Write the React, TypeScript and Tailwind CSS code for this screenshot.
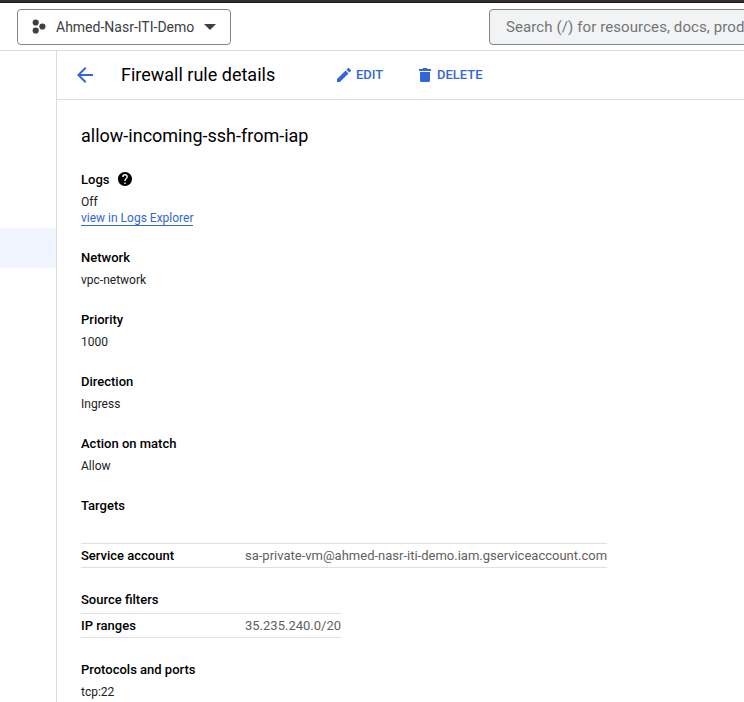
import React from "react";

function Field({ label, value }: { label: string; value: string }) {
  return (
    <div className="mb-[18px]">
      <div className="h-5 text-[13px] leading-5 font-medium text-black">{label}</div>
      <div className="h-6 text-[12px] leading-6 text-[#212121]">{value}</div>
    </div>
  );
}

function Row({ label, value }: { label: string; value: string }) {
  return (
    <div className="flex h-[25px] w-fit border-y border-[#e0e0e0] text-[13px] leading-[24px] whitespace-nowrap">
      <span className="w-[164px] font-medium text-black">{label}</span>
      <span className="text-[#616161]">{value}</span>
    </div>
  );
}

export default function App() {
  return (
    <div className="flex h-[702px] w-[744px] flex-col overflow-hidden bg-white font-['Roboto',sans-serif]">
      <div className="h-[3px] shrink-0 border-b border-[#1b1b1b] bg-[#332f32]" />
      <header className="flex h-12 shrink-0 items-start border-b border-[#dadce0] pt-1.5 pl-[17px]">
        <button className="flex h-9 w-[214px] shrink-0 items-center rounded-[4px] border border-[#80868b] pl-[14px] text-[14px] text-[#3c4043]">
          <svg className="-mt-[2px]" width="14" height="15" viewBox="0 0 14 15" fill="#3c4043">
            <circle cx="3.7" cy="3.5" r="3.1" />
            <circle cx="10.4" cy="7.5" r="3.1" />
            <circle cx="3.7" cy="11.5" r="3.1" />
          </svg>
          <span className="ml-[10px] w-[139px] text-left whitespace-nowrap">Ahmed-Nasr-ITI-Demo</span>
          <svg className="ml-[9px]" width="12" height="6" viewBox="0 0 12 6" fill="#3c4043">
            <path d="M0 0h12L6 6z" />
          </svg>
        </button>
        <div className="ml-[258px] h-9 w-[300px] shrink-0 rounded-[4px] border border-[#80868b] bg-[#f1f3f4] pl-4 text-[15px] leading-[34px] tracking-[0.1px] whitespace-nowrap text-[#757575]">
          Search (/) for resources, docs, prod
        </div>
      </header>
      <div className="flex min-h-0 flex-1">
        <aside className="w-[57px] shrink-0 border-r border-[#dadce0] pt-[177px]">
          <div className="h-10 bg-[#f0f5ff]" />
        </aside>
        <main className="min-w-0 flex-1">
          <div className="flex h-[49px] items-center border-b border-[#dadce0] pl-5">
            <svg width="16" height="16" viewBox="4 4 16 16" fill="#3367d6">
              <path d="M20 11H7.83l5.59-5.59L12 4l-8 8 8 8 1.41-1.41L7.83 13H20v-2z" />
            </svg>
            <h1 className="mb-[2px] ml-7 w-[216px] text-[18px] text-black">Firewall rule details</h1>
            <button className="flex w-[82px] items-center text-[13px] font-medium text-[#3367d6]">
              <svg width="14" height="14" viewBox="3 3 18 18" fill="currentColor">
                <path d="M3 17.25V21h3.75L17.81 9.94l-3.75-3.75L3 17.25zM20.71 7.04a1 1 0 0 0 0-1.41l-2.34-2.34a1 1 0 0 0-1.41 0l-1.83 1.83 3.75 3.75 1.83-1.83z" />
              </svg>
              <span className="ml-[5px]">EDIT</span>
            </button>
            <button className="flex items-center text-[13px] font-medium text-[#3367d6]">
              <svg width="12" height="14" viewBox="0 0 12 14" fill="currentColor">
                <path d="M0 1h3.5L4 0h4l.5 1H12v2H0zM1 4h10v8.5a1.5 1.5 0 0 1-1.5 1.5h-7A1.5 1.5 0 0 1 1 12.5z" />
              </svg>
              <span className="ml-[6px]">DELETE</span>
            </button>
          </div>
          <div className="pt-6 pl-6">
            <h2 className="h-[46px] text-[18px] leading-6 text-black">allow-incoming-ssh-from-iap</h2>
            <div className="mb-[22px]">
              <div className="flex h-5 text-[13px] leading-5 font-medium text-black">
                Logs
                <svg className="mt-[2px] ml-[9px]" width="14" height="14" viewBox="2 2 20 20">
                  <path d="M12 2C6.48 2 2 6.48 2 12s4.48 10 10 10 10-4.48 10-10S17.52 2 12 2zm1 17h-2v-2h2v2zm2.07-7.75-.9.92C13.45 12.9 13 13.5 13 15h-2v-.5c0-1.1.45-2.1 1.17-2.83l1.24-1.26c.37-.36.59-.86.59-1.41a2 2 0 0 0-4 0H8a4 4 0 0 1 8 0c0 .88-.36 1.68-.93 2.25z" />
                </svg>
              </div>
              <div className="mt-1 text-[12px] leading-4 text-[#212121]">Off</div>
              <a className="block h-4 w-fit border-b border-[#3367d6] text-[12px] leading-4 text-[#3367d6]">
                view in Logs Explorer
              </a>
            </div>
            <Field label="Network" value="vpc-network" />
            <Field label="Priority" value="1000" />
            <Field label="Direction" value="Ingress" />
            <Field label="Action on match" value="Allow" />
            <div className="mb-[27px] h-5 text-[13px] leading-5 font-medium text-black">Targets</div>
            <Row label="Service account" value="sa-private-vm@ahmed-nasr-iti-demo.iam.gserviceaccount.com" />
            <div className="mt-[22px] mb-[3px] h-5 text-[13px] leading-5 font-medium text-black">Source filters</div>
            <Row label="IP ranges" value="35.235.240.0/20" />
            <div className="h-[22px]" />
            <Field label="Protocols and ports" value="tcp:22" />
          </div>
        </main>
      </div>
    </div>
  );
}
